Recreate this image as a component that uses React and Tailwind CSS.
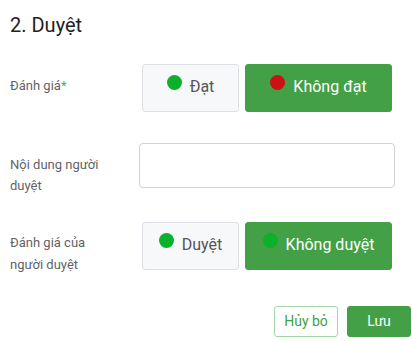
const Dot = ({ color }) => (
    <span className={`inline-block h-[15px] w-[15px] shrink-0 rounded-full mb-[11px] ${color}`} />
);

const ChoiceButton = ({ label, dot, active, width }) => (
    <button
        className={`flex h-[48px] items-center justify-center gap-[8px] rounded-[3px] border text-[16px] ${width} ${
            active
                ? "border-[#43a047] bg-[#43a047] text-white"
                : "border-[#dcdfe3] bg-[#f7f8fa] text-[#555]"
        }`}
    >
        <Dot color={dot} />
        <span className="mb-[3px]">{label}</span>
    </button>
);

const App = () => {
    return (
        <div className="h-[341px] w-[412px] overflow-hidden bg-white font-['Roboto',sans-serif] text-[#5f6368]">
            <div className="pl-[10px] pt-[13px]">
                <h2 className="text-[20px] leading-[24px] text-[#222]">2. Duyệt</h2>

                <div className="mt-[27px] flex items-start">
                    <div className="w-[129px] pt-[11px] text-[13px] leading-[22px]">
                        Đánh giá<span className="text-[#4caf50]">*</span>
                    </div>
                    <div className="ml-[3px] flex gap-[6px]">
                        <ChoiceButton label="Đạt" dot="bg-[#0bb02b]" width="w-[97px]" />
                        <ChoiceButton label="Không đạt" dot="bg-[#cc1014]" active width="w-[147px]" />
                    </div>
                </div>

                <div className="mt-[31px] flex items-start">
                    <div className="w-[129px] pt-[11px] text-[13px] leading-[21px]">
                        Nội dung người
                        <br />
                        duyệt
                    </div>
                    <input className="h-[45px] w-[256px] rounded-[4px] border border-[#cfd3d8] bg-white px-3 outline-none" />
                </div>

                <div className="mt-[26px] flex items-start">
                    <div className="w-[129px] pt-[10px] text-[13px] leading-[22px]">
                        Đánh giá của
                        <br />
                        người duyệt
                    </div>
                    <div className="ml-[3px] flex gap-[6px]">
                        <ChoiceButton label="Duyệt" dot="bg-[#0bb02b]" width="w-[97px]" />
                        <ChoiceButton label="Không duyệt" dot="bg-[#0bb02b]" active width="w-[147px]" />
                    </div>
                </div>

                <div className="mt-[30px] flex justify-end gap-[9px] pr-[1px]">
                    <button className="h-[31px] w-[64px] rounded-[3px] border border-[#a5d6a7] bg-white text-[14px] text-[#43a047]">
                        Hủy bỏ
                    </button>
                    <button className="h-[31px] w-[64px] rounded-[3px] border border-[#43a047] bg-[#43a047] text-[14px] text-white">
                        Lưu
                    </button>
                </div>
            </div>
        </div>
    );
};

export default App;
